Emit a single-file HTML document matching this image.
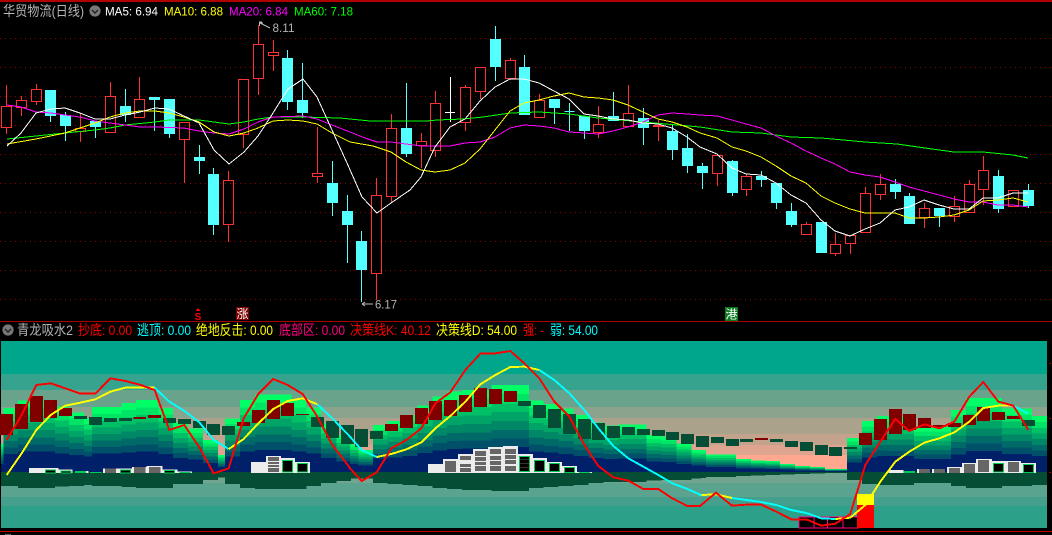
<!DOCTYPE html>
<html><head><meta charset="utf-8"><style>
html,body{margin:0;padding:0;background:#000;width:1052px;height:535px;overflow:hidden}
svg{display:block}
text{font-family:"Liberation Sans","WenQuanYi Zen Hei","Noto Sans CJK SC",sans-serif;font-size:12px}
.cj{font-size:14px}
.ma{fill:none;stroke-width:1;shape-rendering:crispEdges}
.ln{fill:none;stroke-width:5.8;stroke-linejoin:round;shape-rendering:crispEdges}
.cr{shape-rendering:crispEdges}
</style></head><body>
<svg width="1052" height="535" viewBox="0 0 1052 535" xmlns="http://www.w3.org/2000/svg">
<defs>
<g id="m" class="cr">
<rect y="-1" width="1" height="1" fill="#00ff66"/>
<rect y="-.895" width="1" height=".895" fill="#00e466"/>
<rect y="-.79" width="1" height=".79" fill="#00c066"/>
<rect y="-.688" width="1" height=".688" fill="#00a466"/>
<rect y="-.586" width="1" height=".586" fill="#008866"/>
<rect y="-.484" width="1" height=".484" fill="#006a68"/>
<rect y="-.384" width="1" height=".384" fill="#00506a"/>
<rect y="-.285" width="1" height=".285" fill="#00206a"/>
</g>
</defs>
<rect width="1052" height="535" fill="#000"/>
<rect y="0" width="1052" height="2" fill="#b00000"/>
<g stroke="#8f0000" stroke-dasharray="1 4" fill="none" class="cr">
<path d="M0 38.5H1052M0 67.5H1052M0 96.5H1052M0 125.5H1052M0 154.5H1052M0 183.5H1052M0 212.5H1052M0 241.5H1052M0 270.5H1052M0 299.5H1052"/>
</g>
<!-- red candles -->
<path class="cr" fill="none" stroke="#ff3232" d="M1.5 106.5h10v21h-10zM6.5 85V106M6.5 127V134
M16.5 100.5h10v7h-10zM21.5 96V100M21.5 107V116
M31.5 89.5h10v12h-10zM36.5 84V89M36.5 101V105
M75.5 128.5h10v3h-10zM80.5 113V128M80.5 131V142
M105.5 96.5h10v36h-10zM110.5 82V96
M134.5 99.5h10v18h-10zM139.5 77V99
M179.5 122.5h10v17h-10zM184.5 139V183
M223.5 180.5h10v44h-10zM228.5 171V180M228.5 224V242
M238.5 79.5h10v55h-10zM243.5 134V148
M253.5 44.5h10v34h-10zM258.5 25V44M258.5 78V95
M268.5 52.5h10v3h-10zM273.5 40V52M273.5 55V71
M312.5 173.5h10v3h-10zM317.5 127V173M317.5 176V183
M371.5 195.5h10v78h-10zM376.5 178V195M376.5 273V300
M386.5 128.5h10v68h-10zM391.5 114V128M391.5 196V203
M416.5 141.5h10v4h-10zM421.5 133V141M421.5 145V168
M430.5 103.5h10v47h-10zM435.5 91V103M435.5 150V157
M460.5 87.5h10v35h-10zM465.5 85V87M465.5 122V131
M475.5 67.5h10v24h-10zM480.5 91V99
M505.5 60.5h10v18h-10zM510.5 58V60M510.5 78V80
M534.5 100.5h10v17h-10zM539.5 94V100M539.5 117V118
M593.5 124.5h10v8h-10zM598.5 106V124M598.5 132V138
M623.5 113.5h10v13h-10zM628.5 85V113
M653.5 125.5h10v1h-10zM658.5 120V125M658.5 127V141
M712.5 155.5h10v18h-10zM717.5 173V186
M741.5 176.5h10v13h-10zM746.5 174V176M746.5 189V196
M801.5 224.5h10v10h-10zM806.5 222V224
M830.5 244.5h10v9h-10zM835.5 233V244M835.5 253V256
M845.5 235.5h10v8h-10zM850.5 243V254
M860.5 193.5h10v39h-10zM865.5 187V193
M875.5 184.5h10v10h-10zM880.5 174V184M880.5 194V200
M919.5 208.5h10v9h-10zM924.5 203V208M924.5 217V228
M949.5 206.5h10v10h-10zM954.5 196V206M954.5 216V222
M964.5 184.5h10v28h-10zM969.5 180V184
M978.5 170.5h10v19h-10zM983.5 156V170M983.5 189V205
M1008.5 190.5h10v16h-10z"/>
<path class="cr" fill="none" stroke="#ff3232" stroke-width="2" d="M653 126H664"/>
<!-- cyan candles -->
<path class="cr" fill="#54ffff" stroke="#54ffff" d="M45.5 90.5h10v25h-10zM50.5 90V122
M60.5 115.5h10v10h-10zM65.5 112V141
M90.5 121.5h10v5h-10zM95.5 121V138
M120.5 106.5h10v8h-10zM125.5 89V122
M149.5 97.5h10v2h-10zM154.5 97V131
M164.5 99.5h10v34h-10zM169.5 99V138
M194.5 157.5h10v3h-10zM199.5 145V174
M208.5 174.5h10v50h-10zM213.5 168V235
M282.5 58.5h10v43h-10zM287.5 50V110
M297.5 100.5h10v12h-10zM302.5 63V118
M327.5 183.5h10v19h-10zM332.5 161V216
M342.5 211.5h10v13h-10zM347.5 195V263
M356.5 241.5h10v28h-10zM361.5 231V302
M401.5 128.5h10v25h-10zM406.5 83V157
M490.5 39.5h10v27h-10zM495.5 26V81
M519.5 67.5h10v47h-10zM524.5 55V115
M549.5 99.5h10v8h-10zM554.5 99V124
M564.5 111.5h10M569.5 103V131
M579.5 116.5h10v14h-10zM584.5 116V139
M608.5 116.5h10v4h-10zM613.5 92V121
M638.5 118.5h10v9h-10zM643.5 108V145
M667.5 131.5h10v18h-10zM672.5 124V160
M682.5 148.5h10v17h-10zM687.5 134V173
M697.5 166.5h10v6h-10zM702.5 163V189
M727.5 161.5h10v31h-10zM732.5 160V196
M756.5 176.5h10v3h-10zM761.5 171V187
M771.5 183.5h10v19h-10zM776.5 183V209
M786.5 211.5h10v13h-10zM791.5 203V227
M816.5 222.5h10v30h-10z
M890.5 184.5h10v7h-10zM895.5 179V199
M904.5 196.5h10v27h-10zM909.5 193V224
M934.5 208.5h10v7h-10zM939.5 208V227
M993.5 176.5h10v32h-10zM998.5 170V213
M1023.5 190.5h10v15h-10zM1028.5 184V208"/>
<path class="cr" fill="none" stroke="#fff" d="M445 112.5H455M450.5 77V122"/>
<!-- MA lines -->
<polyline class="ma" stroke="#00ff00" points="7,139 36,136 65,133 95,130 110,128 125,125 155,122 169,120 199,120 214,122 229,124 244,122 258,119 273,117 303,117 340,118 350,119 370,121 427,121 437,120 463,119 483,117 510,113 539,112 569,114 598,118 643,122 700,127 732,132 761,133 791,137 821,138 865,142 897,144 932,149 954,152 983,152 1013,155 1028,158"/>
<polyline class="ma" stroke="#ff00ff" points="7,105 21,107 36,112 51,113 65,115 80,117 95,121 110,123 125,125 140,127 155,127 184,128 199,131 214,133 229,134 244,129 258,122 273,117 303,116 317,119 332,125 350,132 365,138 377,142 391,142 406,144 421,146 450,146 465,143 480,142 495,137 510,128 524,125 539,126 554,128 569,132 584,133 598,134 613,131 628,127 643,122 658,115 672,113 687,114 700,115 717,116 732,120 746,124 761,128 776,136 791,143 806,151 821,158 835,164 850,172 865,175 880,177 895,182 909,187 924,191 939,195 954,199 969,202 983,202 998,205 1013,205 1028,207"/>
<polyline class="ma" stroke="#ffff00" points="7,144 36,139 65,133 95,123 110,117 125,113 140,111 155,111 169,113 184,117 199,122 214,132 229,136 244,133 258,128 273,121 288,120 303,121 317,124 332,133 350,142 373,146 391,152 406,162 421,170 435,172 450,170 465,163 480,149 495,130 510,111 524,103 539,100 554,96 569,93 584,97 598,98 613,100 628,105 643,112 658,119 672,122 687,127 700,133 717,138 732,147 746,151 761,157 776,166 791,176 806,183 821,196 835,203 850,209 865,213 880,213 895,213 909,218 924,218 939,217 954,215 969,210 983,201 998,200 1013,198 1028,202"/>
<polyline class="ma" stroke="#ffffff" points="7,146 21,133 36,113 51,109 65,108 80,113 95,119 110,119 125,115 140,112 155,108 169,109 184,116 199,123 214,150 229,164 244,152 258,136 273,113 288,89 303,79 317,97 332,130 347,163 362,197 377,213 391,203 410,190 421,177 435,147 450,127 465,119 480,101 495,87 510,79 524,79 539,83 554,91 569,99 584,114 598,116 613,119 628,120 643,123 658,124 672,128 687,137 700,147 717,154 732,168 746,174 761,175 776,183 791,195 806,203 821,220 835,231 850,236 865,229 880,223 895,210 909,207 924,200 939,205 954,209 969,209 983,198 998,198 1013,193 1028,193"/>
<!-- header -->
<text class="cj" x="3" y="16" fill="#b4b4b4" textLength="81" lengthAdjust="spacingAndGlyphs">华贸物流(日线)</text>
<circle cx="95" cy="11" r="5.6" fill="#787878"/><path d="M92 10l3 3 3-3" fill="none" stroke="#222" stroke-width="1.4"/>
<text x="105" y="15.5" fill="#fff" textLength="53" lengthAdjust="spacingAndGlyphs">MA5: 6.94</text>
<text x="164" y="15.5" fill="#ff0" textLength="59" lengthAdjust="spacingAndGlyphs">MA10: 6.88</text>
<text x="229" y="15.5" fill="#f0f" textLength="59" lengthAdjust="spacingAndGlyphs">MA20: 6.84</text>
<text x="294" y="15.5" fill="#0f0" textLength="59" lengthAdjust="spacingAndGlyphs">MA60: 7.18</text>
<!-- price labels -->
<path d="M259.5 26V22H262M260 23l10 5M260 23l3 0" fill="none" stroke="#bbb"/>
<text x="272.5" y="32" fill="#b4b4b4" textLength="22" lengthAdjust="spacingAndGlyphs">8.11</text>
<path d="M362 304H373M362 304l3-2M362 304l3 2" fill="none" stroke="#bbb"/>
<text x="375" y="308.5" fill="#b4b4b4" textLength="22" lengthAdjust="spacingAndGlyphs">6.17</text>
<!-- markers -->
<path d="M198 308l-2.500 3h5z" fill="#f00"/>
<text x="198" y="320" fill="#f00" text-anchor="middle" font-weight="bold" style="font-size:10px">S</text>
<rect x="236" y="307" width="13" height="13" fill="#7a0000"/>
<text x="242.5" y="318" fill="#fff" text-anchor="middle">涨</text>
<rect x="725" y="307" width="13" height="14" fill="#0a7a1e"/>
<text x="731.5" y="318.5" fill="#fff" text-anchor="middle">港</text>
<rect y="321" width="1052" height="1" fill="#a80000"/>
<!-- lower title -->
<circle cx="8" cy="330" r="5.6" fill="#787878"/><path d="M5 329l3 3 3-3" fill="none" stroke="#222" stroke-width="1.4"/>
<text class="cj" x="17" y="335" fill="#b4b4b4" textLength="56" lengthAdjust="spacingAndGlyphs">青龙吸水2</text>
<text class="cj" x="78" y="335" fill="#f00" textLength="54" lengthAdjust="spacingAndGlyphs">抄底: 0.00</text>
<text class="cj" x="137" y="335" fill="#0ff" textLength="54" lengthAdjust="spacingAndGlyphs">逃顶: 0.00</text>
<text class="cj" x="196" y="335" fill="#ff0" textLength="77" lengthAdjust="spacingAndGlyphs">绝地反击: 0.00</text>
<text class="cj" x="279" y="335" fill="#ff0080" textLength="66" lengthAdjust="spacingAndGlyphs">底部区: 0.00</text>
<text class="cj" x="350" y="335" fill="#f00" textLength="81" lengthAdjust="spacingAndGlyphs">决策线K: 40.12</text>
<text class="cj" x="436" y="335" fill="#ff0" textLength="81" lengthAdjust="spacingAndGlyphs">决策线D: 54.00</text>
<text class="cj" x="523" y="335" fill="#f00" textLength="21" lengthAdjust="spacingAndGlyphs">强: -</text>
<text class="cj" x="550" y="335" fill="#0ff" textLength="48" lengthAdjust="spacingAndGlyphs">弱: 54.00</text>
<!-- lower panel bands -->
<g class="cr">
<rect x="1" y="341" width="1046" height="33" fill="#00a68c"/>
<rect x="1" y="374" width="1046" height="16" fill="#35a38d"/>
<rect x="1" y="390" width="1046" height="17" fill="#6aa38c"/>
<rect x="1" y="407" width="1046" height="11" fill="#8ba38c"/>
<rect x="1" y="418" width="1046" height="16" fill="#aba28c"/>
<rect x="1" y="434" width="1046" height="11" fill="#c4a38c"/>
<rect x="1" y="445" width="1046" height="10" fill="#dfa48f"/>
<rect x="1" y="455" width="1046" height="17" fill="#ffa78f"/>
<rect x="1" y="472" width="1046" height="11" fill="#72a590"/>
<rect x="1" y="483" width="1046" height="14" fill="#5aa38e"/>
<rect x="1" y="497" width="1046" height="9" fill="#44a08c"/>
<rect x="1" y="506" width="1046" height="22" fill="#2da08a"/>
</g>
<!-- section 1 -->
<g transform="translate(0 335) scale(.33333)">
<path class="cr" fill="#054d35" d="M3 411H54V453H3zM54 411H165V459H54zM165 411H207V455H165zM207 411H252V453H207zM252 411H276V450H252zM276 411H364V453H276zM364 411H408V456H364zM408 411H519V459H408zM519 411H609V447H519zM609 411H654V435H609zM654 411H675V427H654zM675 411H720V447H675zM720 411H765V459H720zM765 411H920V462H765zM920 411H963V453H920zM963 411H1009V444H963zM1009 411H1053V438H1009z"/>
<use href="#m" transform="translate(3 411) scale(7 86)"/>
<use href="#m" transform="translate(10 411) scale(44 192)"/>
<use href="#m" transform="translate(54 411) scale(111 214)"/>
<use href="#m" transform="translate(165 411) scale(42 196)"/>
<use href="#m" transform="translate(207 411) scale(45 179)"/>
<use href="#m" transform="translate(252 411) scale(24 161)"/>
<use href="#m" transform="translate(276 411) scale(88 195)"/>
<use href="#m" transform="translate(364 411) scale(44 207)"/>
<use href="#m" transform="translate(408 411) scale(67 216)"/>
<use href="#m" transform="translate(475 411) scale(44 192)"/>
<use href="#m" transform="translate(519 411) scale(45 149)"/>
<use href="#m" transform="translate(564 411) scale(45 131)"/>
<use href="#m" transform="translate(609 411) scale(45 96)"/>
<use href="#m" transform="translate(654 411) scale(21 51)"/>
<use href="#m" transform="translate(675 411) scale(45 161)"/>
<use href="#m" transform="translate(720 411) scale(45 216)"/>
<use href="#m" transform="translate(765 411) scale(110 233)"/>
<use href="#m" transform="translate(875 411) scale(45 216)"/>
<use href="#m" transform="translate(920 411) scale(43 193)"/>
<use href="#m" transform="translate(963 411) scale(46 146)"/>
<use href="#m" transform="translate(1009 411) scale(44 111)"/>
<path class="cr" fill="#800000" d="M0 237h39v63h-39zM45 207h39v75h-39zM90 183h39v78h-39zM132 195h39v54h-39zM177 219h39v24h-39zM400 246h38v6h-38zM444 240h39v9h-39zM711 261h39v12h-39zM756 225h39v39h-39zM801 195h39v57h-39zM843 204h39v39h-39zM888 237h39v3h-39z"/>
<path class="cr" fill="#054d35" d="M222 243h39v9h-39zM267 246h39v24h-39zM312 249h39v12h-39zM357 249h39v9h-39zM489 249h39v15h-39zM534 252h39v15h-39zM579 258h39v21h-39zM621 267h39v33h-39zM666 273h39v27h-39zM933 246h39v30h-39zM978 258h39v51h-39zM1023 270h30v57h-30z"/>
<path class="cr" fill="#ececec" d="M87 399H175V414H87zM175 404H218V414H175zM258 408H265V414H258zM309 400H400V414H309zM396 396H440V414H396zM440 393H487V414H440zM487 403H532V414H487zM532 410H576V414H532zM753 381H798V414H753zM798 363H843V414H798zM843 369H885V414H843zM885 381H930V414H885z"/>
<path class="cr" fill="#666" d="M315 400h33v14h-33zM402 396h34v18h-34zM447 396h34v18h-34zM804 366h33v12h-33zM804 381h33v6h-33zM804 390h33v6h-33zM804 399h33v12h-33z"/>
<path class="cr" fill="#00cc55" d="M225 408h33v6h-33zM270 411h35v3h-35zM538 411h33v3h-33z"/>
<path class="cr" fill="#000" stroke="#00cc55" stroke-width="3" d="M137 405.5h30v8h-30zM182.500 407.500h30v6h-30zM361.500 404.500h30v9h-30zM493.500 406.500h30v7h-30zM847.500 376.500h30v34h-30zM892.500 385.500h30v25h-30z"/>
<polyline class="ln" stroke="#ffff00" points="20,420 65,355 109,285 152,240 196,212 241,203 286,193 331,170 376,158 419,158 464,158"/>
<polyline class="ln" stroke="#00ffff" points="464,158 508,200 553,228 598,262 641,315 686,342"/>
<polyline class="ln" stroke="#ffff00" points="686,342 731,312 775,265 820,222 863,198 908,190 952,208"/>
<polyline class="ln" stroke="#00ffff" points="952,208 997,250 1053,308"/>
<polyline class="ln" stroke="#ff0000" points="20,315 65,240 109,150 152,145 196,160 241,176 286,176 331,130 376,138 419,149 464,165 508,285 553,270 598,337 641,415 686,400 731,250 775,177 820,132 863,150 908,177 952,245 997,330 1053,403"/>
</g>
<!-- section 2 -->
<g transform="translate(350 335) scale(.33333)">
<path class="cr" fill="#054d35" d="M0 411H69V430H0zM69 411H113V444H69zM113 411H158V447H113zM158 411H203V450H158zM203 411H247V453H203zM247 411H291V459H247zM291 411H336V462H291zM336 411H425V465H336zM425 411H537V468H425zM537 411H581V459H537zM581 411H625V456H581zM625 411H670V453H625zM670 411H715V450H670zM715 411H760V444H715zM760 411H890V441H760zM890 411H935V436H890zM935 411H1024V435H935zM1024 411H1053V430H1024z"/>
<use href="#m" transform="translate(0 411) scale(25 83)"/>
<use href="#m" transform="translate(25 411) scale(44 66)"/>
<use href="#m" transform="translate(69 411) scale(44 141)"/>
<use href="#m" transform="translate(113 411) scale(45 153)"/>
<use href="#m" transform="translate(158 411) scale(45 171)"/>
<use href="#m" transform="translate(203 411) scale(44 199)"/>
<use href="#m" transform="translate(247 411) scale(44 226)"/>
<use href="#m" transform="translate(291 411) scale(45 241)"/>
<use href="#m" transform="translate(336 411) scale(89 246)"/>
<use href="#m" transform="translate(425 411) scale(112 261)"/>
<use href="#m" transform="translate(537 411) scale(44 214)"/>
<use href="#m" transform="translate(581 411) scale(44 204)"/>
<use href="#m" transform="translate(625 411) scale(45 191)"/>
<use href="#m" transform="translate(670 411) scale(45 171)"/>
<use href="#m" transform="translate(715 411) scale(45 149)"/>
<use href="#m" transform="translate(760 411) scale(45 139)"/>
<use href="#m" transform="translate(805 411) scale(85 143)"/>
<use href="#m" transform="translate(890 411) scale(45 111)"/>
<use href="#m" transform="translate(935 411) scale(45 106)"/>
<use href="#m" transform="translate(980 411) scale(44 85)"/>
<use href="#m" transform="translate(1024 411) scale(29 66)"/>
<path class="cr" fill="#800000" d="M105 267h39v21h-39zM150 240h39v39h-39zM195 219h39v48h-39zM237 198h39v57h-39zM282 195h39v48h-39zM327 180h39v51h-39zM372 159h39v57h-39zM417 162h39v45h-39zM462 168h39v33h-39z"/>
<path class="cr" fill="#054d35" d="M0 270h12v57h-12zM15 282h39v54h-39zM60 288h39v24h-39zM504 198h39v15h-39zM549 210h39v39h-39zM594 222h39v57h-39zM639 237h39v60h-39zM684 252h39v60h-39zM726 264h39v51h-39zM771 273h39v36h-39zM816 276h39v24h-39zM861 282h39v18h-39zM906 285h39v18h-39zM948 291h39v24h-39zM993 297h39v30h-39zM1038 303h15v33h-15z"/>
<path class="cr" fill="#ececec" d="M234 387h45v27h-45zM279 372h45v42h-45zM324 357h45v57h-45zM369 342h45v72h-45zM414 336h45v78h-45zM459 333h45v81h-45zM504 357h45v57h-45zM549 369h42v45h-42zM591 381h45v33h-45zM636 393h45v21h-45zM681 411h45v3h-45z"/>
<path class="cr" fill="#666" d="M285 378h33v33h-33zM330 363h33v12h-33zM330 387h33v9h-33zM330 399h33v12h-33zM375 348h33v15h-33zM375 366h33v12h-33zM375 381h33v9h-33zM375 393h33v15h-33zM420 342h33v15h-33zM420 363h33v12h-33zM420 378h33v12h-33zM420 393h33v15h-33zM465 342h33v15h-33zM465 360h33v12h-33zM465 375h33v12h-33zM465 393h33v15h-33z"/>
<path class="cr" fill="#000" stroke="#00cc55" stroke-width="3" d="M508.500 364.500h30v45h-30zM553.500 376.500h30v33h-30zM598.500 385.500h30v24h-30zM643.500 397.500h30v15h-30z"/>
<path class="cr" fill="none" stroke="#666" stroke-width="2" d="M510 374h27M510 386h27M510 398h27"/>
<path class="cr" fill="#00cc55" d="M687 411h33v3h-33z"/>
<polyline class="ln" stroke="#00ffff" points="-3,303 0,305 35,345 80,366"/>
<polyline class="ln" stroke="#ffff00" points="80,366 124,357 169,343 214,322 256,280 301,243 346,200 391,148 436,120 481,96 523,95 568,105"/>
<polyline class="ln" stroke="#00ffff" points="568,105 613,135 658,175 703,225 745,280 790,333 835,370 880,395 925,420 967,445 1012,462 1053,480"/>
<polyline class="ln" stroke="#ff0000" points="-3,397 0,400 35,438 80,412 124,340 169,315 214,280 256,205 301,172 346,105 391,56 436,55 481,48 523,85 568,130 613,200 658,245 703,330 745,393 790,427 835,437 880,462 925,462 967,490 1012,513 1053,513"/>
</g>
<!-- section 3 -->
<g transform="translate(700 335) scale(.33333)">
<path class="cr" fill="#054d35" d="M0 411H18V429H0zM18 411H108V426H18zM108 411H153V423H108zM153 411H197V422H153zM197 411H240V420H197zM240 411H285V418H240zM285 411H330V417H285zM330 411H375V416H330zM375 411H441V414H375zM441 411H486V435H441zM486 411H531V447H486zM531 411H642V450H531zM642 411H753V444H642zM753 411H798V453H753zM798 411H906V459H798zM906 411H996V453H906zM996 411H1041V450H996z"/>
<use href="#m" transform="translate(0 411) scale(18 66)"/>
<use href="#m" transform="translate(18 411) scale(90 53)"/>
<use href="#m" transform="translate(108 411) scale(45 39)"/>
<use href="#m" transform="translate(153 411) scale(44 35)"/>
<use href="#m" transform="translate(197 411) scale(43 33)"/>
<use href="#m" transform="translate(240 411) scale(45 24)"/>
<use href="#m" transform="translate(285 411) scale(45 18)"/>
<use href="#m" transform="translate(330 411) scale(45 15)"/>
<use href="#m" transform="translate(375 411) scale(66 9)"/>
<use href="#m" transform="translate(441 411) scale(45 102)"/>
<use href="#m" transform="translate(486 411) scale(45 153)"/>
<use href="#m" transform="translate(531 411) scale(36 168)"/>
<use href="#m" transform="translate(567 411) scale(75 166)"/>
<use href="#m" transform="translate(642 411) scale(111 136)"/>
<use href="#m" transform="translate(753 411) scale(45 186)"/>
<use href="#m" transform="translate(798 411) scale(108 222)"/>
<use href="#m" transform="translate(906 411) scale(90 191)"/>
<use href="#m" transform="translate(996 411) scale(45 168)"/>
<path class="cr" fill="#800000" d="M165 309h39v6h-39zM477 294h39v36h-39zM522 252h39v63h-39zM567 222h39v75h-39zM609 237h39v48h-39zM654 249h39v30h-39zM699 270h39v6h-39zM744 264h39v12h-39zM789 240h39v30h-39zM831 216h39v42h-39zM876 231h39v24h-39zM921 243h39v9h-39z"/>
<path class="cr" fill="#054d35" d="M0 303h27v33h-27zM33 306h39v18h-39zM78 312h39v21h-39zM120 312h39v9h-39zM210 312h39v9h-39zM255 318h39v18h-39zM300 321h39v27h-39zM345 330h39v30h-39zM387 336h39v27h-39zM432 336h39v6h-39zM966 255h39v18h-39z"/>
<path class="cr" fill="#ececec" d="M565 405h45v9h-45zM651 402h39v12h-39zM696 402h39v12h-39zM741 396h45v18h-45zM786 384h45v30h-45zM828 372h48v42h-48zM876 378h42v36h-42zM918 378h45v36h-45zM963 384h45v30h-45z"/>
<path class="cr" fill="#666" d="M657 402h33v12h-33zM702 402h33v12h-33zM747 399h33v15h-33zM792 387h33v27h-33zM834 375h33v36h-33zM924 381h33v30h-33z"/>
<path class="cr" fill="#00cc55" d="M610 408h35v6h-35z"/>
<path class="cr" fill="#000" stroke="#00cc55" stroke-width="3" d="M880.500 385.500h30v25h-30zM970.500 388.500h30v24h-30z"/>
<rect class="cr" x="295" y="546" width="181" height="33" fill="#000"/>
<path class="cr" fill="none" stroke="#ff0080" stroke-width="3" d="M296.500 546.500h45v32h-45zM341.500 546.500h41v32h-41zM382.500 546.500h46v32h-46zM428.500 546.500h47v32h-47z"/>
<rect class="cr" x="471" y="477" width="51" height="33" fill="#ffff00"/>
<rect class="cr" x="471" y="510" width="51" height="69" fill="#ff0000"/>
<polyline class="ln" stroke="#00ffff" points="-3,480 5,480"/>
<polyline class="ln" stroke="#ffff00" points="5,480 48,478 96,489"/>
<polyline class="ln" stroke="#00ffff" points="96,489 139,495 184,501 229,510 274,525 319,534 364,550 406,552"/>
<polyline class="ln" stroke="#ffff00" points="406,552 451,548 496,510 541,440 586,380 628,350 673,323 718,310 763,292 808,260 850,219 895,212 940,212"/>
<polyline class="ln" stroke="#00ffff" points="940,212 985,236"/>
<polyline class="ln" stroke="#ff0000" points="-3,513 0,513 48,473 96,512 139,509 184,509 229,530 274,553 319,553 364,572 406,566 451,537 496,390 541,320 586,252 628,288 673,268 718,280 763,260 808,185 850,141 895,200 940,212 985,285"/>
</g>
<rect y="531" width="1052" height="1" fill="#c80000"/>
<rect x="5" y="534" width="6" height="1" fill="#666"/>
<path class="cr" stroke="#a00" fill="none" d="M1049 363.500h2M1049 418.500h2M1049 472.500h2"/>
</svg>
</body></html>
